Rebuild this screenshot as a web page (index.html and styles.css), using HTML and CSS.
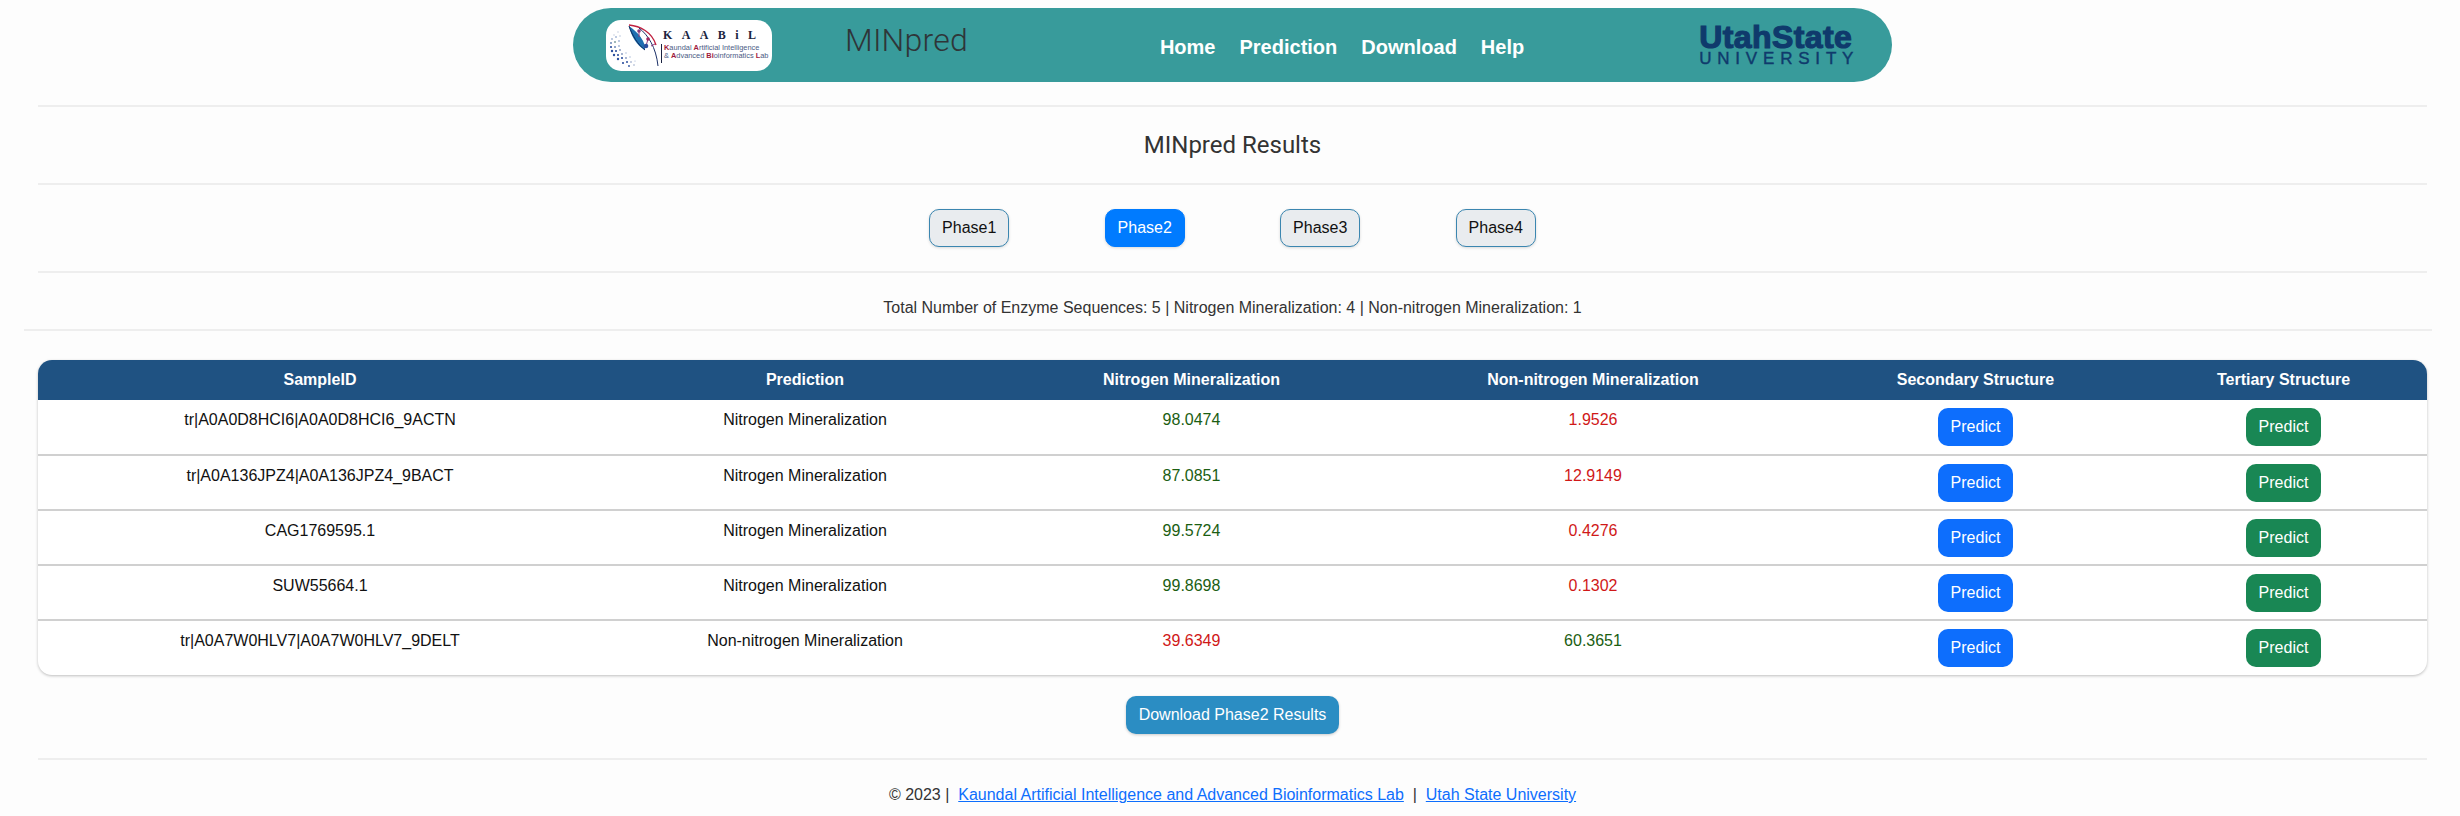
FILE: index.html
```html
<!DOCTYPE html>
<html lang="en">
<head>
<meta charset="utf-8">
<title>MINpred Results</title>
<link rel="stylesheet" href="styles.css">
</head>
<body>
<div class="page">
  <header class="banner">
    <div class="lab-logo">
      <svg class="lab-mark" viewBox="0 0 55 51" width="55" height="51" aria-hidden="true">
        <g fill="#2c4f9e">
          <circle cx="8" cy="15" r=".7" fill="#b9c6dc"/><circle cx="12" cy="12" r=".7" fill="#b9c6dc"/><circle cx="6" cy="19" r=".9" fill="#9fb2d2"/><circle cx="10" cy="17" r=".9" fill="#9fb2d2"/><circle cx="14" cy="16" r=".8" fill="#b9c6dc"/>
          <circle cx="5" cy="23" r="1" fill="#6d88b8"/><circle cx="9" cy="22" r="1" fill="#7f9f9f"/><circle cx="13" cy="21" r=".9" fill="#9fb2d2"/><circle cx="5" cy="27" r="1.1"/><circle cx="9" cy="27" r="1" fill="#6d88b8"/><circle cx="13" cy="26" r=".9" fill="#9fb2d2"/>
          <circle cx="6" cy="31" r="1.2"/><circle cx="10" cy="31" r="1.1"/><circle cx="14" cy="30" r=".9" fill="#7f93bb"/><circle cx="8" cy="35" r="1.2"/><circle cx="12" cy="35" r="1.1"/><circle cx="16" cy="34" r=".9" fill="#7f93bb"/><circle cx="20" cy="33" r=".7" fill="#9fb2d2"/>
          <circle cx="12" cy="39" r="1.2"/><circle cx="16" cy="38" r="1.1"/><circle cx="20" cy="38" r=".9" fill="#7f93bb"/><circle cx="24" cy="37" r=".7" fill="#9fb2d2"/><circle cx="17" cy="43" r="1.1"/><circle cx="21" cy="42" r="1"/><circle cx="25" cy="42" r=".8" fill="#7f93bb"/><circle cx="23" cy="46" r=".9"/><circle cx="28" cy="45" r=".7" fill="#7f93bb"/><circle cx="29" cy="41" r=".6" fill="#9fb2d2"/>
        </g>
        <path d="M23 5C34 6 46 12 50 25" fill="none" stroke="#c0203f" stroke-width="1.4"/>
        <path d="M23 6C25 16 31 26 39 30C40 22 32 12 23 6Z" fill="#1f6fb0"/>
        <path d="M23 6C26 15 32 25 39 30" fill="none" stroke="#0d2a5c" stroke-width="1"/>
        <path d="M33 8C42 15 50 27 52 46" fill="none" stroke="#1a2f66" stroke-width="1"/>
        <path d="M33 10L33 17M42 19L40 26M45 26L49 24" fill="none" stroke="#8a3a7c" stroke-width="1"/>
        <circle cx="33" cy="11" r="1.8" fill="#8a3a7c"/>
        <circle cx="42" cy="19" r="1.8" fill="#a2275f"/>
        <circle cx="40" cy="26" r="2.3" fill="#2c4f9e"/>
      </svg>
      <div class="lab-text">
        <div class="lab-name">KAABiL</div>
        <div class="lab-sub">
          <div class="lab-line"><b class="hl">K</b>aundal <b class="hl">A</b>rtificial Intelligence</div>
          <div class="lab-line">&amp; <b class="hl">A</b>dvanced <b class="hl">Bi</b>oinformatics <b class="hl">L</b>ab</div>
        </div>
      </div>
    </div>
    <div class="brand">MINpred</div>
    <nav class="nav">
      <a href="#">Home</a>
      <a href="#">Prediction</a>
      <a href="#">Download</a>
      <a href="#">Help</a>
    </nav>
    <div class="usu">
      <div class="usu-top">UtahState</div>
      <div class="usu-bottom">UNIVERSITY</div>
    </div>
  </header>
  <hr class="rule rule-first">
  <h1 class="title">MINpred Results</h1>
  <hr class="rule">
  <div class="phases">
    <button class="phase">Phase1</button>
    <button class="phase phase-active">Phase2</button>
    <button class="phase">Phase3</button>
    <button class="phase">Phase4</button>
  </div>
  <hr class="rule">
  <p class="summary">Total Number of Enzyme Sequences: 5 | Nitrogen Mineralization: 4 | Non-nitrogen Mineralization: 1</p>
  <hr class="rule rule-wide">
  <div class="table-card">
    <table class="results">
      <colgroup>
        <col class="c1"><col class="c2"><col class="c3"><col class="c4"><col class="c5"><col class="c6">
      </colgroup>
      <thead>
        <tr><th>SampleID</th><th>Prediction</th><th>Nitrogen Mineralization</th><th>Non-nitrogen Mineralization</th><th>Secondary Structure</th><th>Tertiary Structure</th></tr>
      </thead>
      <tbody>
        <tr><td>tr|A0A0D8HCI6|A0A0D8HCI6_9ACTN</td><td>Nitrogen Mineralization</td><td class="good">98.0474</td><td class="bad">1.9526</td><td><button class="predict blue">Predict</button></td><td><button class="predict green">Predict</button></td></tr>
        <tr><td>tr|A0A136JPZ4|A0A136JPZ4_9BACT</td><td>Nitrogen Mineralization</td><td class="good">87.0851</td><td class="bad">12.9149</td><td><button class="predict blue">Predict</button></td><td><button class="predict green">Predict</button></td></tr>
        <tr><td>CAG1769595.1</td><td>Nitrogen Mineralization</td><td class="good">99.5724</td><td class="bad">0.4276</td><td><button class="predict blue">Predict</button></td><td><button class="predict green">Predict</button></td></tr>
        <tr><td>SUW55664.1</td><td>Nitrogen Mineralization</td><td class="good">99.8698</td><td class="bad">0.1302</td><td><button class="predict blue">Predict</button></td><td><button class="predict green">Predict</button></td></tr>
        <tr><td>tr|A0A7W0HLV7|A0A7W0HLV7_9DELT</td><td>Non-nitrogen Mineralization</td><td class="bad">39.6349</td><td class="good">60.3651</td><td><button class="predict blue">Predict</button></td><td><button class="predict green">Predict</button></td></tr>
      </tbody>
    </table>
  </div>
  <div class="download-row"><button class="download">Download Phase2 Results</button></div>
  <hr class="rule">
  <footer class="footer">© 2023 |&nbsp; <a href="#">Kaundal Artificial Intelligence and Advanced Bioinformatics Lab</a> &nbsp;|&nbsp; <a href="#">Utah State University</a></footer>
</div>
</body>
</html>
```

FILE: styles.css
```css
* { box-sizing: border-box; }
html, body { margin: 0; padding: 0; }
body {
  background: #fdfdfd;
  color: #333;
  font-family: "Liberation Sans", Arial, sans-serif;
  font-size: 16px;
  overflow: hidden;
}
.page {
  width: 2389px;
  height: 816px;
  margin-left: 38px;
  padding-top: 8px;
}
.banner {
  display: flex;
  align-items: center;
  width: 1319px;
  height: 74px;
  margin: 0 auto;
  padding-left: 33px;
  background: #389b9b;
  border-radius: 38px / 37px;
}
.lab-logo {
  display: flex;
  flex: none;
  width: 166px;
  height: 51px;
  background: #fff;
  border-radius: 15px;
  overflow: hidden;
}
.lab-mark { flex: none; }
.lab-text { padding: 9px 0 0 2px; white-space: nowrap; }
.lab-name {
  font-family: "Liberation Serif", serif;
  font-weight: bold;
  font-size: 12px;
  line-height: 12px;
  letter-spacing: 9.4px;
  color: #1a2340;
}
.lab-sub {
  margin-top: 3px;
  margin-left: -2px;
  padding-left: 2px;
  border-left: 1px solid #1a2340;
  height: 19px;
}
.lab-line {
  font-size: 7.4px;
  line-height: 8.5px;
  color: #4a5a84;
}
.lab-line b { font-weight: bold; }
.hl { color: #a01a3c; }
.brand {
  margin-left: 73px;
  margin-top: -10px;
  font-family: Roboto, sans-serif;
  font-size: 32px;
  font-weight: 300;
  letter-spacing: .2px;
  color: #2f3538;
}
.nav {
  display: flex;
  gap: 24px;
  margin-left: 192px;
  margin-top: 4px;
}
.nav a {
  color: #fff;
  font-weight: bold;
  font-size: 20px;
  text-decoration: none;
}
.usu {
  margin-left: 175px;
  margin-top: -2px;
  color: #0f3a6c;
  white-space: nowrap;
}
.usu-top {
  font-weight: bold;
  font-size: 32px;
  line-height: 28px;
  letter-spacing: .4px;
  -webkit-text-stroke: 1.2px #0f3a6c;
}
.usu-bottom {
  font-size: 17px;
  line-height: 15px;
  letter-spacing: 5.8px;
  -webkit-text-stroke: .4px #0f3a6c;
}
.rule {
  height: 2px;
  margin: 0;
  border: 0;
  background: #eeeeee;
}
.rule-first { margin-top: 23px; }
.rule-wide { margin: 0 -5px 0 -14px; }
.title {
  margin: 0;
  height: 76px;
  line-height: 76px;
  text-align: center;
  font-family: Roboto, sans-serif;
  font-size: 24px;
  font-weight: 400;
  color: #333;
}
.phases {
  display: flex;
  justify-content: center;
  align-items: center;
  gap: 95.5px;
  height: 86px;
}
.phase {
  width: 80px;
  height: 38px;
  padding: 0;
  font-family: inherit;
  font-size: 16px;
  color: #111;
  background: #e9ecef;
  border: 1px solid #3b86b0;
  border-radius: 10px;
  box-shadow: 0 1px 3px rgba(0, 0, 0, .15);
}
.phase-active {
  color: #fff;
  background: #007bff;
  border-color: #007bff;
}
.summary {
  height: 56px;
  margin: 0;
  padding-top: 25px;
  line-height: 20px;
  text-align: center;
}
.table-card {
  margin-top: 29px;
  border-radius: 14px;
  overflow: hidden;
  box-shadow: 0 1px 3px rgba(0, 0, 0, .25);
  background: #fff;
}
.results {
  width: 100%;
  border-collapse: collapse;
  table-layout: fixed;
  text-align: center;
}
.c1 { width: 564px; }
.c2 { width: 406px; }
.c3 { width: 367px; }
.c4 { width: 436px; }
.c5 { width: 329px; }
.results th {
  height: 40px;
  padding: 0;
  background: #1f5282;
  color: #fff;
  font-size: 16px;
  font-weight: bold;
}
.results td {
  height: 55px;
  padding: 8px 0 0;
  vertical-align: top;
  color: #111;
  line-height: 24px;
  border-bottom: 2px solid #d0d0d0;
}
.results tbody tr:last-child td { border-bottom: 0; }
.results td.good { color: #1b5e12; }
.results td.bad { color: #d01818; }
.predict {
  display: block;
  width: 75px;
  height: 38px;
  margin: 0 auto;
  padding: 0;
  border: 0;
  border-radius: 10px;
  color: #fff;
  font-family: inherit;
  font-size: 16px;
}
.blue { background: #0d6efd; }
.green { background: #198754; }
.download-row {
  display: flex;
  justify-content: center;
  padding: 21px 0 24px;
}
.download {
  width: 213px;
  height: 38px;
  padding: 0;
  border: 0;
  border-radius: 10px;
  background: #2b8dc3;
  color: #fff;
  font-family: inherit;
  font-size: 16px;
  box-shadow: 0 1px 3px rgba(0, 0, 0, .2);
}
.footer {
  padding-top: 25px;
  text-align: center;
  line-height: 20px;
  color: #333;
}
.footer a { color: #0d6efd; }
```
